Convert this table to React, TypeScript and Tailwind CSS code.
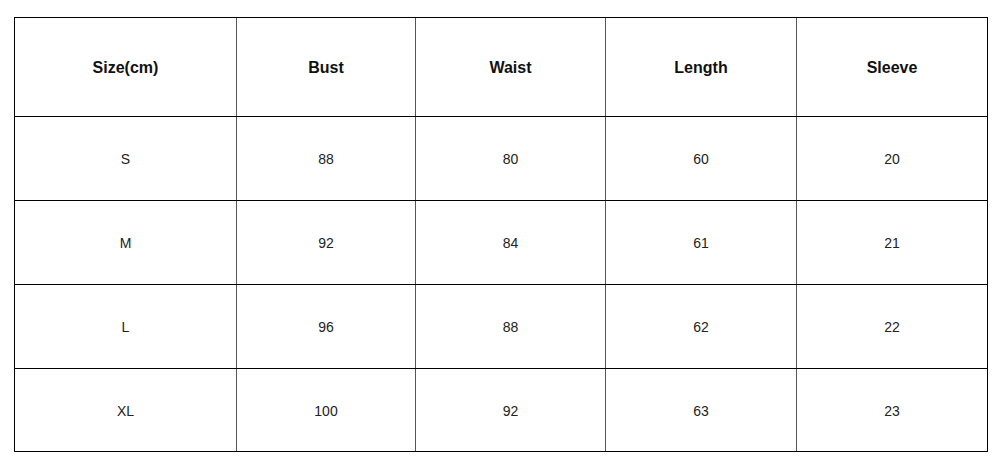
const headers = ["Size(cm)", "Bust", "Waist", "Length", "Sleeve"];

const rows = [
  ["S", "88", "80", "60", "20"],
  ["M", "92", "84", "61", "21"],
  ["L", "96", "88", "62", "22"],
  ["XL", "100", "92", "63", "23"],
];

const widths = ["w-[222px]", "w-[179px]", "w-[190px]", "w-[191px]", "w-[190px]"];

const Row = ({ cells, head, last }: { cells: string[]; head?: boolean; last?: boolean }) => (
  <div
    className={`flex ${head ? "h-[99px]" : last ? "h-[82px]" : "h-[84px]"} ${
      last ? "" : "border-b border-black"
    }`}
  >
    {cells.map((c, i) => (
      <div
        key={i}
        className={`${widths[i]} flex items-center justify-center pt-[2px] ${
          i < cells.length - 1 ? "border-r border-[#555]" : ""
        } ${head ? "text-[16px] font-bold text-[#111]" : "text-[14px] text-[#222]"}`}
      >
        {c}
      </div>
    ))}
  </div>
);

export default function App() {
  return (
    <div className="w-[1000px] h-[471px] bg-white pt-[17px] pl-[14px] font-['Liberation_Sans',Arial,sans-serif]">
      <div className="w-[974px] border border-black box-border">
        <Row cells={headers} head />
        {rows.map((r, i) => (
          <Row key={i} cells={r} last={i === rows.length - 1} />
        ))}
      </div>
    </div>
  );
}
